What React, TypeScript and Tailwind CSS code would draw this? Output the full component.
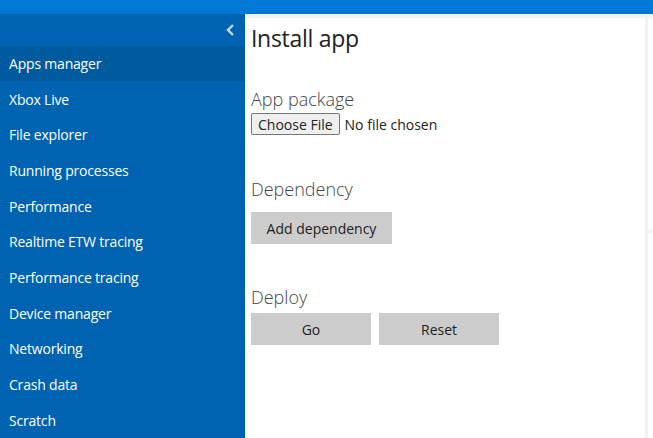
import React from "react";

const items = ["Apps manager","Xbox Live","File explorer","Running processes","Performance","Realtime ETW tracing","Performance tracing","Device manager","Networking","Crash data","Scratch"];

export default function App() {
  return (
    <div className="w-[653px] h-[438px] overflow-hidden flex flex-col bg-[#f2f2f2]" style={{ fontFamily: '"Segoe UI","Open Sans",sans-serif' }}>
      <div className="h-[14px] bg-[#0078d7] shrink-0" />
      <div className="flex flex-1 min-h-0">
        <div className="w-[245px] shrink-0 bg-[#0063b1] text-white flex flex-col">
          <div className="h-[32px] flex items-center justify-end pr-[10px] text-[#c7d9ec]">
            <svg width="9" height="12" viewBox="0 0 9 12"><path d="M7 1 L2 6 L7 11" stroke="currentColor" strokeWidth="2.4" fill="none" /></svg>
          </div>
          {items.map((t, i) => (
            <div key={t} className={`h-[36px] flex items-center pl-[9px] text-[14px] tracking-[-0.2px] ${i === 0 ? "bg-[#005a9e]" : ""}`}>{t}</div>
          ))}
        </div>
        <div className="flex-1 flex pt-[4px] gap-[3px]">
          <div className="w-[400px] bg-white pl-[6px] text-[#222]">
            <div className="text-[23px] leading-[30px] mt-[5px] tracking-[-0.3px]">Install app</div>
            <div className="text-[18px] font-light text-[#444] mt-[34px] leading-[24px]">App package</div>
            <div className="flex items-center text-[14px] mt-[2px]">
              <span className="h-[22px] px-[6px] border border-[#767676] rounded-[2px] bg-[#efefef] flex items-center">Choose File</span>
              <span className="ml-[5px]">No file chosen</span>
            </div>
            <div className="text-[18px] font-light text-[#444] mt-[42px] leading-[24px]">Dependency</div>
            <div className="mt-[11px] w-[141px] h-[32px] bg-[#cccccc] flex items-center justify-center text-[14px]">Add dependency</div>
            <div className="text-[18px] font-light text-[#444] mt-[41px] leading-[24px]">Deploy</div>
            <div className="flex gap-[8px] mt-[4px]">
              <div className="w-[120px] h-[32px] bg-[#cccccc] flex items-center justify-center text-[14px]">Go</div>
              <div className="w-[120px] h-[32px] bg-[#cccccc] flex items-center justify-center text-[14px]">Reset</div>
            </div>
          </div>
          <div className="flex-1 flex flex-col gap-[3px]">
            <div className="h-[212px] bg-white" />
            <div className="flex-1 bg-white" />
          </div>
        </div>
      </div>
    </div>
  );
}
